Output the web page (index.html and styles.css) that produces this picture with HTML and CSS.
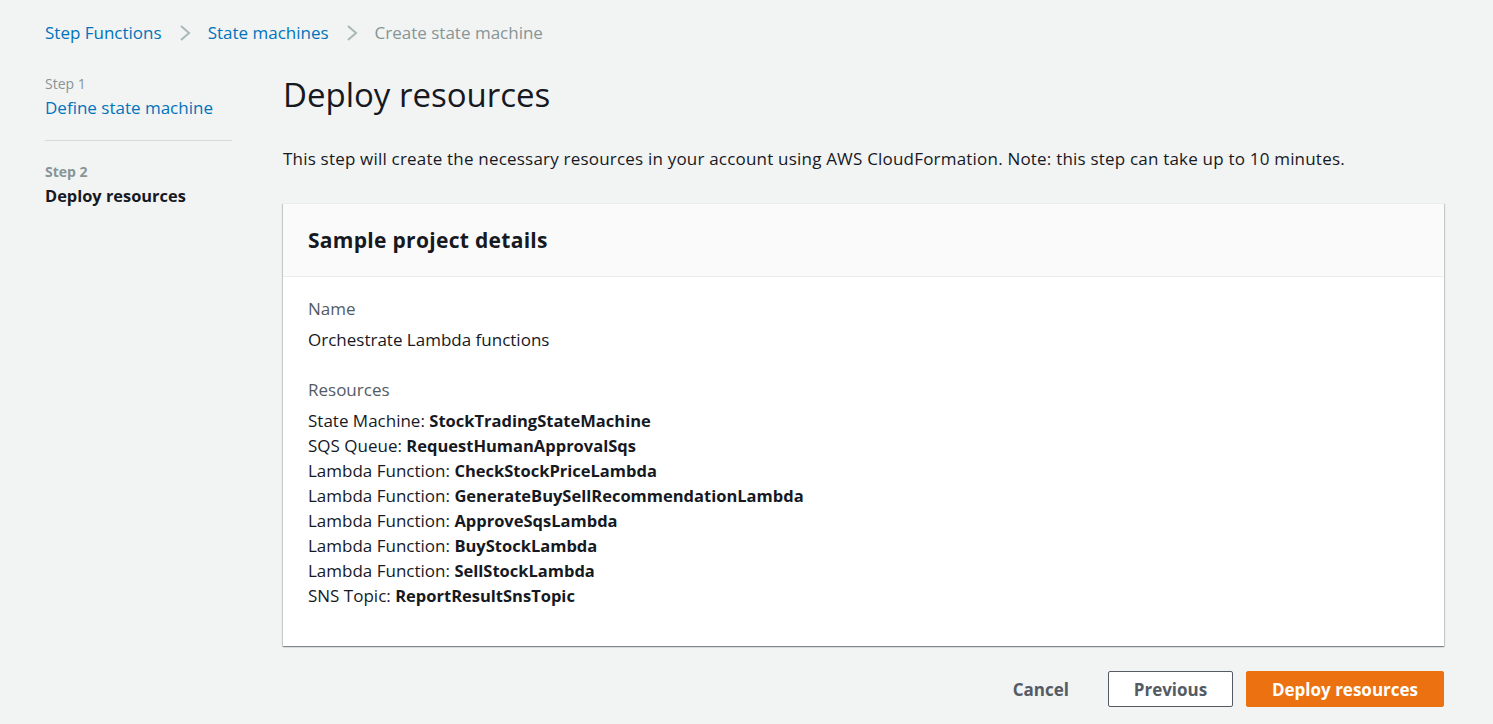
FILE: index.html
```html
<!DOCTYPE html>
<html lang="en">
<head>
<meta charset="utf-8">
<title>Create state machine</title>
<link rel="stylesheet" href="styles.css">
</head>
<body>
<div class="page">
  <nav class="breadcrumbs">
    <a class="crumb-link" href="#">Step Functions</a>
    <svg class="chev" width="12" height="18" viewBox="0 0 12 18"><polyline points="2,2 10,9 2,16" fill="none" stroke="#aab7b8" stroke-width="2"/></svg>
    <a class="crumb-link" href="#">State machines</a>
    <svg class="chev" width="12" height="18" viewBox="0 0 12 18"><polyline points="2,2 10,9 2,16" fill="none" stroke="#aab7b8" stroke-width="2"/></svg>
    <span class="crumb-current">Create state machine</span>
  </nav>
  <div class="layout">
    <aside class="steps">
      <div class="step">
        <div class="step-label">Step 1</div>
        <a class="step-link" href="#">Define state machine</a>
      </div>
      <div class="step step-active">
        <div class="step-label">Step 2</div>
        <div class="step-title">Deploy resources</div>
      </div>
    </aside>
    <main class="main">
      <h1 class="title">Deploy resources</h1>
      <p class="desc">This step will create the necessary resources in your account using AWS CloudFormation. Note: this step can take up to 10 minutes.</p>
      <section class="card">
        <header class="card-header">
          <h2 class="card-title">Sample project details</h2>
        </header>
        <div class="card-body">
          <div class="field">
            <div class="field-label">Name</div>
            <div class="field-value">Orchestrate Lambda functions</div>
          </div>
          <div class="field">
            <div class="field-label">Resources</div>
            <ul class="res-list">
              <li>State Machine: <b>StockTradingStateMachine</b></li>
              <li>SQS Queue: <b>RequestHumanApprovalSqs</b></li>
              <li>Lambda Function: <b>CheckStockPriceLambda</b></li>
              <li>Lambda Function: <b>GenerateBuySellRecommendationLambda</b></li>
              <li>Lambda Function: <b>ApproveSqsLambda</b></li>
              <li>Lambda Function: <b>BuyStockLambda</b></li>
              <li>Lambda Function: <b>SellStockLambda</b></li>
              <li>SNS Topic: <b>ReportResultSnsTopic</b></li>
            </ul>
          </div>
        </div>
      </section>
      <div class="actions">
        <button class="btn btn-link">Cancel</button>
        <button class="btn btn-normal">Previous</button>
        <button class="btn btn-primary">Deploy resources</button>
      </div>
    </main>
  </div>
</div>
</body>
</html>
```

FILE: styles.css
```css
html, body {
  margin: 0;
  padding: 0;
}
body {
  background: #f2f3f3;
  font-family: "Open Sans", "Liberation Sans", Arial, sans-serif;
  color: #16191f;
  font-size: 17px;
}
.page {
  padding: 20px 49px 0 45px;
}
.breadcrumbs {
  display: flex;
  align-items: center;
  height: 26px;
  line-height: 26px;
  font-size: 17px;
}
.crumb-link {
  color: #0073bb;
  text-decoration: none;
}
.chev {
  margin: 0 17px;
}
.crumb-current {
  color: #879596;
}
.layout {
  display: grid;
  grid-template-columns: 187px 1fr;
  column-gap: 51px;
  margin-top: 26px;
}
.step {
  padding-bottom: 20px;
  border-bottom: 1px solid #d5dbdb;
}
.step-active {
  border-bottom: none;
  padding-top: 19px;
}
.step-label {
  font-size: 14px;
  line-height: 24px;
  color: #879596;
}
.step-active .step-label {
  font-weight: 700;
}
.step-link {
  color: #0073bb;
  text-decoration: none;
  font-size: 17px;
  line-height: 24px;
}
.step-title {
  font-weight: 700;
  font-size: 16.4px;
  line-height: 24px;
}
.title {
  margin: 1px 0 0 0;
  font-size: 33px;
  font-weight: 400;
  line-height: 44px;
}
.desc {
  margin: 31px 0 0 0;
  line-height: 22px;
  letter-spacing: 0.2px;
}
.card {
  margin-top: 33px;
  background: #fff;
  box-shadow: 0 1px 1px 0 rgba(0,28,36,.3), 1px 1px 1px 0 rgba(0,28,36,.15), -1px 1px 1px 0 rgba(0,28,36,.15);
  border-top: 1px solid #eaeded;
}
.card-header {
  background: #fafafa;
  border-bottom: 1px solid #eaeded;
  padding: 0 25px;
  height: 72px;
  display: flex;
  align-items: center;
}
.card-title {
  margin: 0;
  font-size: 21px;
  font-weight: 700;
  letter-spacing: 0.3px;
}
.card-body {
  padding: 19px 25px 38px 25px;
}
.field + .field {
  margin-top: 25px;
}
.field-label {
  color: #545b64;
  line-height: 25px;
}
.field-value {
  line-height: 25px;
  margin-top: 6px;
}
.res-list {
  list-style: none;
  margin: 6px 0 0 0;
  padding: 0;
}
.res-list li {
  line-height: 25px;
}
.res-list b {
  font-size: 16.5px;
}
.actions {
  display: flex;
  justify-content: flex-end;
  align-items: center;
  margin-top: 25px;
  gap: 13px;
}
.btn {
  font-family: inherit;
  font-size: 17px;
  font-weight: 700;
  height: 36px;
  border-radius: 2px;
  cursor: pointer;
  padding: 0;
  white-space: nowrap;
}
.btn-link {
  background: none;
  border: none;
  color: #545b64;
  padding: 0 26px;
}
.btn-normal {
  background: #fff;
  border: 1px solid #545b64;
  color: #545b64;
  width: 125px;
}
.btn-primary {
  background: #ec7211;
  border: 1px solid #ec7211;
  color: #fff;
  width: 198px;
}
```
